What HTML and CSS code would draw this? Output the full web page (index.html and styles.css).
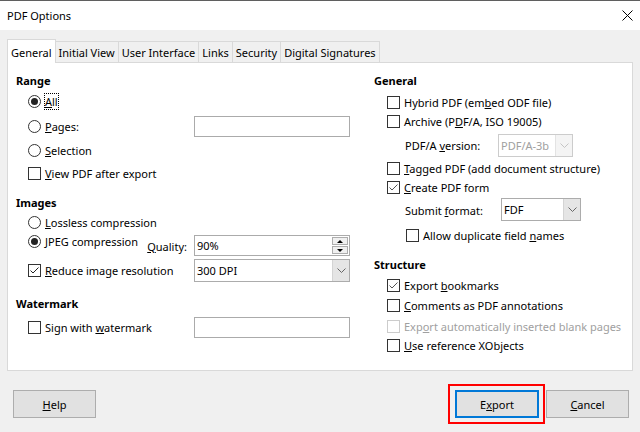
FILE: index.html
```html
<!DOCTYPE html>
<html>
<head>
<meta charset="utf-8">
<link rel="stylesheet" href="styles.css">
</head>
<body>
<div class="titlebar">
  <span class="title">PDF Options</span>
  <svg class="close" width="11" height="11" viewBox="0 0 11 11"><path d="M0.5 0.5 L10.5 10.5 M10.5 0.5 L0.5 10.5" stroke="#000" stroke-width="1" fill="none"/></svg>
</div>
<div class="tabs">
  <div class="tab active">General</div>
  <div class="tab">Initial View</div>
  <div class="tab">User Interface</div>
  <div class="tab">Links</div>
  <div class="tab">Security</div>
  <div class="tab">Digital Signatures</div>
</div>
<div class="panel">
  <div class="col">
    <div class="heading">Range</div>
    <div class="row ind-l h23"><span class="rb on"></span><span class="lbl focus"><u>A</u>ll</span></div>
    <div class="row ind-l h26"><span class="rb"></span><span class="lbl"><u>P</u>ages:</span><div class="field"></div></div>
    <div class="row ind-l h23"><span class="rb"></span><span class="lbl"><u>S</u>election</span></div>
    <div class="row ind-l h22"><span class="cb"></span><span class="lbl"><u>V</u>iew PDF after export</span></div>

    <div class="heading mt8">Images</div>
    <div class="row ind-l h21"><span class="rb"></span><span class="lbl"><u>L</u>ossless compression</span></div>
    <div class="row ind-l h24 top">
      <div class="opt"><span class="rb on"></span><span class="lbl"><u>J</u>PEG compression</span></div>
      <div class="quality">
        <span class="qlbl"><u>Q</u>uality:</span>
        <div class="spin">
          <span class="val">90%</span>
          <span class="arrows"><span class="sbtn"><i class="tri up"></i></span><span class="sbtn"><i class="tri down"></i></span></span>
        </div>
      </div>
    </div>
    <div class="row ind-l h23 mt2"><span class="cb on"><svg width="11" height="11" viewBox="0 0 11 11"><polyline points="1.5,5.5 4,8 9.5,2.5" fill="none" stroke="#222" stroke-width="1"/></svg></span><span class="lbl"><u>R</u>educe image resolution</span>
      <div class="combo wide"><span class="val">300 DPI</span><span class="dd"><svg width="9" height="5" viewBox="0 0 9 5"><polyline points="0.5,0.5 4.5,4.5 8.5,0.5" fill="none" stroke="#666"/></svg></span></div>
    </div>

    <div class="heading mt11">Watermark</div>
    <div class="row ind-l h21 mt4"><span class="cb"></span><span class="lbl">Sign with <u>w</u>atermark</span><div class="field"></div></div>
  </div>

  <div class="col">
    <div class="heading">General</div>
    <div class="row ind-r h19 mt3"><span class="cb"></span><span class="lbl">Hybrid PDF (em<u>b</u>ed ODF file)</span></div>
    <div class="row ind-r h19"><span class="cb"></span><span class="lbl">Archive (P<u>D</u>F/A, ISO 19005)</span></div>
    <div class="row sub h23 mt3"><span class="slbl w93">PDF/A <u>v</u>ersion:</span>
      <div class="combo disabled ver"><span class="val">PDF/A-3b</span><span class="dd"><svg width="9" height="5" viewBox="0 0 9 5"><polyline points="0.5,0.5 4.5,4.5 8.5,0.5" fill="none" stroke="#c4c4c4"/></svg></span></div>
    </div>
    <div class="row ind-r h19 mt2"><span class="cb"></span><span class="lbl"><u>T</u>agged PDF (add document structure)</span></div>
    <div class="row ind-r h19"><span class="cb on"><svg width="11" height="11" viewBox="0 0 11 11"><polyline points="1.5,5.5 4,8 9.5,2.5" fill="none" stroke="#555" stroke-width="1"/></svg></span><span class="lbl"><u>C</u>reate PDF form</span></div>
    <div class="row sub h23 mt1"><span class="slbl w96 low">Submit <u>f</u>ormat:</span>
      <div class="combo fdf"><span class="val">FDF</span><span class="dd"><svg width="9" height="5" viewBox="0 0 9 5"><polyline points="0.5,0.5 4.5,4.5 8.5,0.5" fill="none" stroke="#666"/></svg></span></div>
    </div>
    <div class="row sub2 h20 mt4"><span class="cb"></span><span class="lbl">Allow duplicate field <u>n</u>ames</span></div>

    <div class="heading mt9">Structure</div>
    <div class="row ind-r h19 mt2"><span class="cb on"><svg width="11" height="11" viewBox="0 0 11 11"><polyline points="1.5,5.5 4,8 9.5,2.5" fill="none" stroke="#555" stroke-width="1"/></svg></span><span class="lbl">Export <u>b</u>ookmarks</span></div>
    <div class="row ind-r h20"><span class="cb"></span><span class="lbl"><u>C</u>omments as PDF annotations</span></div>
    <div class="row ind-r h19 mt2 off"><span class="cb"></span><span class="lbl">Exp<u>o</u>rt automatically inserted blank pages</span></div>
    <div class="row ind-r h19"><span class="cb"></span><span class="lbl"><u>U</u>se reference XObjects</span></div>
  </div>
</div>
<div class="footer">
  <div class="btn"><span><u>H</u>elp</span></div>
  <div class="spacer"></div>
  <div class="mark"><div class="btn default"><span>E<u>x</u>port</span></div></div>
  <div class="btn cancel"><span><u>C</u>ancel</span></div>
</div>
</body>
</html>
```

FILE: styles.css
```css
* { box-sizing: border-box; }
html, body { margin: 0; padding: 0; }
body {
  width: 640px;
  height: 432px;
  overflow: hidden;
  background: #f0f0f0;
  font-family: "Noto Sans", "DejaVu Sans", sans-serif;
  font-size: 11px;
  color: #000;
}
u { text-underline-offset: 1px; }

.titlebar {
  height: 30px;
  background: #fff;
  border-top: 1px solid #5f5f5f;
  display: flex;
  align-items: center;
  justify-content: space-between;
  padding: 0 7px 0 7px;
}
.title { font-size: 11px; }
.close { display: block; }

.tabs {
  display: flex;
  align-items: flex-end;
  height: 23px;
  margin-top: 9px;
  padding-left: 7px;
}
.tab {
  height: 21px;
  border: 1px solid #d9d9d9;
  border-bottom: none;
  border-left: none;
  padding: 0 3px;
  display: flex;
  align-items: center;
  background: #f0f0f0;
  white-space: nowrap;
}
.tab:first-child { border-left: 1px solid #d9d9d9; }
.tab.active {
  height: 24px;
  background: #fff;
  margin-bottom: -1px;
  padding-top: 1px;
  position: relative;
  z-index: 1;
}

.panel {
  margin-left: 7px;
  width: 626px;
  height: 309px;
  border: 1px solid #d9d9d9;
  background: #fff;
  display: grid;
  grid-template-columns: 334px 1fr;
  column-gap: 24px;
  align-items: start;
  padding: 7px 0 0 8px;
}
.col { display: flex; flex-direction: column; }

.heading {
  height: 20px;
  display: flex;
  align-items: center;
  font-weight: 700;
}
.row { display: flex; align-items: center; white-space: nowrap; }
.row.top { align-items: flex-start; }
.ind-l { padding-left: 12px; }
.ind-r { padding-left: 13px; }
.sub { padding-left: 31px; }
.sub2 { padding-left: 32px; }

.h19 { height: 19px; }
.h20 { height: 20px; }
.h21 { height: 21px; }
.h22 { height: 22px; }
.h23 { height: 23px; }
.h24 { height: 24px; }
.h26 { height: 26px; }
.mt1 { margin-top: 1px; }
.mt2 { margin-top: 2px; }
.mt3 { margin-top: 3px; }
.mt4 { margin-top: 4px; }
.mt8 { margin-top: 8px; }
.mt9 { margin-top: 9px; }
.mt11 { margin-top: 11px; }

.opt { display: flex; align-items: center; height: 17px; }

.rb {
  width: 13px;
  height: 13px;
  border: 1px solid #333;
  border-radius: 50%;
  background: #fff;
  display: flex;
  align-items: center;
  justify-content: center;
  flex: none;
}
.rb.on::after {
  content: "";
  width: 7px;
  height: 7px;
  border-radius: 50%;
  background: #222;
}
.cb {
  width: 13px;
  height: 13px;
  border: 1px solid #333;
  background: #fff;
  flex: none;
  display: flex;
  align-items: center;
  justify-content: center;
}
.cb svg { display: block; }
.lbl { margin-left: 4px; line-height: 15px; }
.lbl.focus {
  margin-left: 3px;
  border: 1px dotted #000;
  padding: 0 0 0 0;
  line-height: 15px;
}
.off .cb { border-color: #cccccc; }
.off .lbl { color: #a0a0a0; }

.field {
  width: 156px;
  height: 21px;
  margin-left: auto;
  border: 1px solid #ababab;
  background: #fff;
}

.quality {
  margin-left: auto;
  display: flex;
  align-items: center;
  margin-top: 2px;
}
.qlbl { margin-right: 7px; padding-top: 1px; }
.spin {
  width: 156px;
  height: 21px;
  border: 1px solid #ababab;
  background: #fff;
  display: flex;
}
.val {
  flex: 1;
  display: flex;
  align-items: center;
  padding-left: 2px;
}
.arrows {
  width: 17px;
  display: flex;
  flex-direction: column;
  padding: 1px 1px 1px 0;
  gap: 1px;
}
.sbtn {
  flex: 1;
  border: 1px solid #adadad;
  background: #f0f0f0;
  display: flex;
  align-items: center;
  justify-content: center;
}
.tri { width: 0; height: 0; border-left: 3px solid transparent; border-right: 3px solid transparent; }
.tri.up { border-bottom: 3px solid #000; }
.tri.down { border-top: 3px solid #000; }

.combo {
  height: 23px;
  border: 1px solid #acacac;
  background: #fff;
  display: flex;
}
.combo.wide { width: 156px; margin-left: auto; }
.combo.fdf { width: 80px; }
.combo.ver { width: 75px; }
.dd {
  width: 17px;
  background: #e5e5e5;
  border-left: 1px solid #d4d4d4;
  display: flex;
  align-items: center;
  justify-content: center;
}
.dd svg { display: block; }
.combo.disabled { border-color: #cccccc; }
.combo.disabled .val { color: #a0a0a0; }
.combo.disabled .dd { background: #f4f4f4; border-left-color: #e3e3e3; }

.slbl { display: block; }
.w93 { width: 93px; }
.w96 { width: 96px; }
.low { padding-top: 2px; }

.footer {
  height: 61px;
  display: flex;
  align-items: flex-start;
  padding: 13px 11px 0 13px;
}
.spacer { flex: 1; }
.btn {
  width: 83px;
  height: 28px;
  margin-top: 6px;
  background: #e1e1e1;
  border: 1px solid #adadad;
  display: flex;
  align-items: center;
  justify-content: center;
}
.btn.default {
  width: 84px;
  margin-top: 0;
  border: 2px solid #0078d7;
}
.mark {
  border: 2px solid #ff0000;
  padding: 4px 4px 4px 5px;
}
.btn.cancel { margin-left: 1px; }
```
